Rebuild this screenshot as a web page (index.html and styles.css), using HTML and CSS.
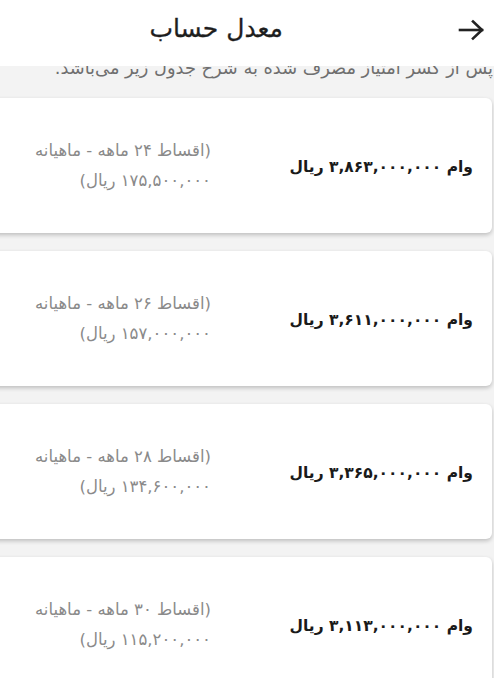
FILE: index.html
```html
<!DOCTYPE html>
<html lang="fa" dir="rtl">
<head>
<meta charset="utf-8">
<title>معدل حساب</title>
<link rel="stylesheet" href="styles.css">
</head>
<body>
<div class="app">
  <header class="topbar">
    <span class="back">
      <svg width="28" height="22" viewBox="0 0 28 22" fill="none" stroke="#222" stroke-width="2.6" stroke-linecap="square">
        <path d="M2 11 H24"/>
        <path d="M15 2.5 L24 11 L15 19.5"/>
      </svg>
    </span>
    <h1 class="title">معدل حساب</h1>
  </header>
  <main class="scroll">
    <div class="scroll-inner">
      <p class="intro">پس از کسر امتیاز مصرف شده به شرح جدول زیر می‌باشد.</p>
      <div class="card">
        <div class="amount">وام ۳,۸۶۳,۰۰۰,۰۰۰ ریال</div>
        <div class="terms"><span class="line">(اقساط ۲۴ ماهه - ماهیانه</span><span class="line">۱۷۵,۵۰۰,۰۰۰ ریال)</span></div>
      </div>
      <div class="card">
        <div class="amount">وام ۳,۶۱۱,۰۰۰,۰۰۰ ریال</div>
        <div class="terms"><span class="line">(اقساط ۲۶ ماهه - ماهیانه</span><span class="line">۱۵۷,۰۰۰,۰۰۰ ریال)</span></div>
      </div>
      <div class="card">
        <div class="amount">وام ۳,۳۶۵,۰۰۰,۰۰۰ ریال</div>
        <div class="terms"><span class="line">(اقساط ۲۸ ماهه - ماهیانه</span><span class="line">۱۳۴,۶۰۰,۰۰۰ ریال)</span></div>
      </div>
      <div class="card">
        <div class="amount">وام ۳,۱۱۳,۰۰۰,۰۰۰ ریال</div>
        <div class="terms"><span class="line">(اقساط ۳۰ ماهه - ماهیانه</span><span class="line">۱۱۵,۲۰۰,۰۰۰ ریال)</span></div>
      </div>
    </div>
  </main>
</div>
</body>
</html>
```

FILE: styles.css
```css
html, body {
  margin: 0;
  padding: 0;
  height: 100%;
}
body {
  font-family: "DejaVu Sans", "Noto Sans", sans-serif;
  background: #f3f3f3;
  color: #222;
  overflow: hidden;
}
.app {
  display: flex;
  flex-direction: column;
  height: 678px;
}
.topbar {
  position: relative;
  z-index: 2;
  height: 66px;
  flex: 0 0 66px;
  background: #fff;
  display: flex;
  align-items: center;
  padding-right: 8px;
}
.back {
  display: flex;
  width: 28px;
  height: 22px;
  margin-top: -6px;
}
.title {
  margin: -10px 175px 0 0;
  font-size: 25px;
  font-weight: normal;
  color: #1e1e1e;
  -webkit-text-stroke: 0.3px #1e1e1e;
}
.scroll {
  flex: 1;
  overflow: hidden;
  background: #f3f3f3;
}
.scroll-inner {
  margin-top: -11px;
}
.intro {
  margin: 0 0 17px 0;
  padding-right: 1px;
  font-size: 17.8px;
  line-height: 26px;
  color: #6f6f6f;
  white-space: nowrap;
}
.card {
  display: flex;
  align-items: center;
  height: 135px;
  margin: 0 2px 18px -12px;
  padding-right: 19px;
  background: #fff;
  border-radius: 6px;
  box-shadow: 0 2px 4px rgba(0, 0, 0, 0.22);
}
.amount {
  flex: 0 0 262px;
  font-size: 15.5px;
  font-weight: bold;
  color: #1a1a1a;
  margin-top: 3px;
  white-space: nowrap;
}
.terms {
  display: flex;
  flex-direction: column;
  font-size: 16.5px;
  line-height: 30px;
  color: #8a8a8a;
  white-space: nowrap;
  margin-top: 1px;
}
.line {
  display: block;
}
```
